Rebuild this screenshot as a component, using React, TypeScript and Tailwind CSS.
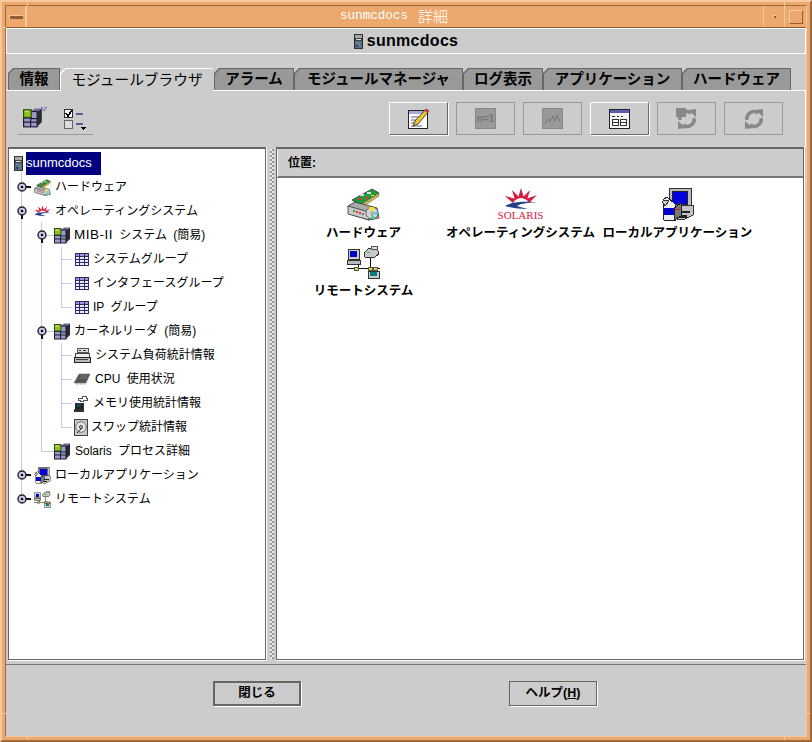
import { ReactNode } from "react";

const font = "[font-family:'Liberation_Sans','Noto_Sans_CJK_JP',sans-serif]";

function ServerIcon({ className }: { className: string }) {
  return (
    <svg viewBox="0 0 10 16" className={className} shapeRendering="crispEdges">
      <rect x="0.5" y="0.5" width="9" height="15" fill="#444" stroke="#222" />
      <rect x="1" y="1" width="8" height="3" fill="#aaa" />
      <rect x="2" y="5" width="6" height="1" fill="#ddd" />
      <rect x="1" y="7" width="8" height="8" fill="#5a6f88" />
      <rect x="2" y="8" width="2" height="2" fill="#7f9ab8" />
      <rect x="5" y="10" width="2" height="2" fill="#7f9ab8" />
      <rect x="2" y="12" width="2" height="2" fill="#30405a" />
    </svg>
  );
}

function CubeIcon({ className }: { className: string }) {
  return (
    <svg viewBox="0 0 17 17" className={className}>
      <polygon points="12,3 16,0.5 16,12 12,16" fill="#2a2a33" />
      <polygon points="7,3 10,0.5 16,0.5 12,3" fill="#6e6e9e" />
      <rect x="0.5" y="8.5" width="11.5" height="7.5" fill="#9a9ad0" stroke="#1c1c2a" />
      <rect x="6.5" y="3" width="5.5" height="6" fill="#9a9ad0" stroke="#1c1c2a" />
      <line x1="6.5" y1="8.5" x2="6.5" y2="16" stroke="#1c1c2a" />
      <line x1="0.5" y1="12" x2="12" y2="12" stroke="#1c1c2a" />
      <rect x="0.5" y="1.5" width="6.5" height="6.5" fill="#8fc31f" stroke="#2d4a10" />
      <rect x="1.5" y="2.5" width="3" height="1" fill="#c9ea70" />
    </svg>
  );
}

function HardwareIcon({ className }: { className: string }) {
  return (
    <svg viewBox="0 0 33 33" className={className}>
      <polygon points="5,12 25,1 32,5 13,17" fill="#1f9a3c" stroke="#333" strokeWidth="0.8" />
      <polygon points="13,17 32,5 32,8 14,20" fill="#c9b54a" stroke="#555" strokeWidth="0.5" />
      <rect x="13" y="6" width="4" height="2" fill="#d8d8d8" />
      <rect x="20" y="4" width="4" height="2" fill="#e0e0e0" />
      <rect x="11" y="10" width="3" height="2" fill="#e33" />
      <rect x="18" y="9" width="3" height="2" fill="#e33" />
      <rect x="24" y="7" width="3" height="1" fill="#ffe14a" />
      <polygon points="1,18 8,14 30,20 32,30 22,32 3,26" fill="#aaa" stroke="#333" strokeWidth="0.8" />
      <polygon points="1,18 22,24 22,32 1,26" fill="#c9c9c9" stroke="#333" strokeWidth="0.8" />
      <rect x="6" y="22" width="2" height="2" fill="#3a3" />
      <rect x="9" y="23" width="2" height="2" fill="#e33" />
      <rect x="12" y="24" width="2" height="2" fill="#e33" />
      <rect x="15" y="25" width="2" height="2" fill="#777" />
      <circle cx="25" cy="25" r="6" fill="#d5d5d5" stroke="#444" strokeWidth="0.7" />
      <polygon points="25,25 22,19 27,19" fill="#ffe400" />
      <polygon points="25,25 28,31 24,31" fill="#35d07a" />
      <polygon points="25,25 31,24 31,27" fill="#39c6e8" />
      <circle cx="25" cy="25" r="1.3" fill="#fff" stroke="#444" strokeWidth="0.5" />
    </svg>
  );
}

function SolarisMark({ className }: { className: string }) {
  return (
    <svg viewBox="0 0 34 22" className={className}>
      <g fill="#d21c3f">
        <polygon points="17,0 20,10 14,10" />
        <polygon points="8,2 16,10 11,12" />
        <polygon points="26,2 23,12 18,10" />
        <polygon points="1,8 12,11 9,15" />
        <polygon points="33,7 25,15 22,11" />
      </g>
      <path d="M1 18 C8 14 14 13 33 14 C20 15 16 16 13 18 C16 19 20 20 24 21 C16 21 8 20 1 18Z" fill="#27408b" />
    </svg>
  );
}

function LocalAppIcon({ className }: { className: string }) {
  return (
    <svg viewBox="0 0 33 33" className={className} shapeRendering="crispEdges">
      <rect x="8" y="0" width="22" height="20" fill="#bbb" stroke="#333" />
      <rect x="11" y="3" width="15" height="13" fill="#0000e0" stroke="#222" />
      <rect x="23" y="17" width="4" height="1" fill="#2c2" />
      <polygon points="11,21 22,17 32,17 32,27 22,32 11,30" fill="#c4c4c4" stroke="#333" />
      <rect x="18" y="23" width="11" height="2" fill="#222" />
      <rect x="18" y="27" width="8" height="3" fill="#222" />
      <polygon points="2,12 6,9 14,16 14,32 3,32" fill="#eee" stroke="#222" />
      <rect x="3" y="20" width="10" height="7" fill="#0000d0" />
      <polygon points="3,12 1,14 4,18 8,13" fill="#ccc" stroke="#333" />
      <polygon points="13,20 20,15 20,28 13,32" fill="#777" stroke="#222" />
      <rect x="14" y="21" width="5" height="1" fill="#c22" />
    </svg>
  );
}

function RemoteIcon({ className }: { className: string }) {
  return (
    <svg viewBox="0 0 33 33" className={className} shapeRendering="crispEdges">
      <path d="M0 22H33M11 14V22M23 11V22M24 22V26" stroke="#111" strokeWidth="1" fill="none" />
      <rect x="1" y="3" width="11" height="10" fill="#ccc" stroke="#333" />
      <rect x="3" y="5" width="7" height="6" fill="#0000c8" />
      <rect x="0" y="14" width="13" height="4" fill="#bbb" stroke="#333" />
      <polygon points="17,7 22,2 30,2 32,8 28,11 18,11" fill="#c8c8c8" stroke="#333" />
      <rect x="20" y="6" width="3" height="1" fill="#2c2" />
      <rect x="24" y="0" width="6" height="3" fill="#e0e0e0" stroke="#555" />
      <rect x="21" y="21" width="4" height="3" fill="#e8d33a" stroke="#555" />
      <rect x="7" y="21" width="4" height="3" fill="#e8d33a" stroke="#555" />
      <rect x="26" y="21" width="4" height="3" fill="#e8d33a" stroke="#555" />
      <rect x="21" y="25" width="11" height="7" fill="#ccc" stroke="#333" />
      <rect x="23" y="26" width="7" height="4" fill="#0a7a80" />
    </svg>
  );
}

function TableIcon() {
  return (
    <svg viewBox="0 0 14 13" className="w-[14px] h-[13px]" shapeRendering="crispEdges">
      <rect x="0.5" y="0.5" width="13" height="12" fill="#e8e8f8" stroke="#2b2b6a" />
      <rect x="1" y="1" width="12" height="2" fill="#9a9ad0" />
      <path d="M0 3.5H14M0 6.5H14M0 9.5H14M4.5 1V13M9.5 1V13" stroke="#2b2b6a" fill="none" />
    </svg>
  );
}

function LoadIcon() {
  return (
    <svg viewBox="0 0 17 15" className="w-[17px] h-[15px]" shapeRendering="crispEdges">
      <rect x="3" y="0" width="11" height="4" fill="#ddd" stroke="#555" />
      <path d="M5 2H7M9 2H12" stroke="#333" />
      <polygon points="2,5 15,5 16,9 1,9" fill="#eee" stroke="#444" />
      <rect x="0.5" y="9.5" width="16" height="5" fill="#bbb" stroke="#222" />
      <rect x="2" y="11" width="12" height="1" fill="#444" />
    </svg>
  );
}

function CpuIcon() {
  return (
    <svg viewBox="0 0 17 12" className="w-[17px] h-[12px]">
      <polygon points="5,1 16,1 12,10 0,10" fill="#555" stroke="#777" strokeWidth="0.6" />
      <path d="M2 11H12" stroke="#888" strokeDasharray="1 1" />
      <polygon points="7,2 14,2 12,6 6,6" fill="#666" />
    </svg>
  );
}

function MemoryIcon() {
  return (
    <svg viewBox="0 0 14 17" className="w-[14px] h-[17px]" shapeRendering="crispEdges">
      <path d="M4 3H8V1H12V3H13V5H9V6H6V5H4Z" fill="#fff" stroke="#555" />
      <rect x="1" y="8" width="8" height="6" fill="#222" stroke="#333" />
      <rect x="3" y="9" width="4" height="3" fill="#0a5060" />
      <rect x="0" y="14" width="10" height="3" fill="#333" />
    </svg>
  );
}

function SwapIcon() {
  return (
    <svg viewBox="0 0 14 17" className="w-[14px] h-[17px]">
      <rect x="0.5" y="0.5" width="13" height="16" fill="#c8c8c8" stroke="#444" />
      <circle cx="7" cy="8" r="5.3" fill="#e2e2e2" stroke="#777" />
      <circle cx="7" cy="8" r="1.6" fill="#aaa" stroke="#555" />
      <path d="M3 14L8 9" stroke="#222" />
    </svg>
  );
}

function EditIcon() {
  return (
    <svg viewBox="0 0 22 21" className="w-[22px] h-[21px]">
      <rect x="0.5" y="2.5" width="19" height="18" fill="#fff" stroke="#222" />
      <rect x="1" y="3" width="18" height="3" fill="#a8a8dc" />
      <path d="M3 9H11M3 12H9M3 15H7M3 18H14" stroke="#5a5a9a" />
      <polygon points="5,18 7,13 18,1 21,3 10,16" fill="#f1c62d" stroke="#222" strokeWidth="0.8" />
      <polygon points="18,1 21,3 19.5,5 16.5,3" fill="#d4423a" />
    </svg>
  );
}

function DisabledBlock({ children }: { children: ReactNode }) {
  return <div className="w-[21px] h-[21px] bg-[#999] border border-[#888] flex items-center justify-center">{children}</div>;
}

function DialogIcon() {
  return (
    <svg viewBox="0 0 21 20" className="w-[21px] h-[20px]" shapeRendering="crispEdges">
      <rect x="0.5" y="0.5" width="20" height="19" fill="#f4f4f4" stroke="#222" />
      <rect x="1" y="1" width="19" height="3" fill="#5c5caa" />
      <path d="M3 7H6M8 7H10M12 7H14" stroke="#333" />
      <rect x="3.5" y="10.5" width="6" height="6" fill="#fff" stroke="#333" />
      <rect x="11.5" y="10.5" width="6" height="6" fill="#fff" stroke="#333" />
      <path d="M3 13.5H10M11 13.5H18" stroke="#333" />
    </svg>
  );
}

function RefreshIcon({ extra }: { extra?: boolean }) {
  return (
    <svg viewBox="0 0 22 22" className="w-[22px] h-[22px]">
      {extra && <rect x="0" y="0" width="10" height="9" fill="#888" />}
      <path d="M4 12A7 7 0 0 1 15 5" stroke="#888" strokeWidth="3.5" fill="none" />
      <polygon points="12,2 20,1 20,9" fill="#888" />
      <path d="M18 10A7 7 0 0 1 7 17" stroke="#888" strokeWidth="3.5" fill="none" />
      <polygon points="10,20 2,21 2,13" fill="#888" />
    </svg>
  );
}

function ToolButton({ enabled, children }: { enabled?: boolean; children: ReactNode }) {
  return (
    <button
      className={
        enabled
          ? "w-[59px] h-[33px] border border-t-white border-l-white border-r-[#666] border-b-[#666] shadow-[1px_1px_0_#fff] flex items-center justify-center"
          : "w-[59px] h-[33px] border border-[#999] flex items-center justify-center"
      }
    >
      {children}
    </button>
  );
}

function Tab({ label, width, active }: { label: string; width: string; active?: boolean }) {
  const clip = "[clip-path:polygon(5px_0,100%_0,100%_100%,0_100%,0_5px)]";
  if (active) {
    return (
      <div className={`${width} h-[23px] -mb-px mr-px relative bg-white pl-px pt-px pr-0 shadow-[1px_0_0_#666] ${clip}`}>
        <div className={`h-full bg-[#cccccc] flex items-center justify-center text-[14.7px] font-normal text-black ${clip}`}>{label}</div>
      </div>
    );
  }
  return (
    <div className={`${width} h-[22px] bg-[#666] px-px pt-px ${clip}`}>
      <div className={`h-full bg-[#999999] flex items-center justify-center text-[14.5px] font-bold text-black ${clip}`}>{label}</div>
    </div>
  );
}

function Handle({ open }: { open?: boolean }) {
  return (
    <svg viewBox="0 0 17 24" className="w-[17px] h-[24px] shrink-0">
      {open ? <rect x="4" y="14" width="2" height="6" fill="#111" /> : <rect x="9" y="11" width="5" height="2" fill="#111" />}
      <circle cx="5" cy="12" r="4" fill="#c8c8ee" stroke="#222" strokeWidth="1.4" />
      <circle cx="5" cy="12" r="1.3" fill="#111" />
    </svg>
  );
}

function TreeRow({ pad, handle, icon, label, gap }: { pad: string; handle?: "open" | "closed"; icon: ReactNode; label: ReactNode; gap: string }) {
  return (
    <div className={`flex items-center h-[24px] ${pad}`}>
      {handle && <Handle open={handle === "open"} />}
      {icon}
      <span className={`${gap} text-[12px] text-black whitespace-nowrap [word-spacing:3px]`}>{label}</span>
    </div>
  );
}

function Notch({ className }: { className: string }) {
  return <div className={`absolute bg-[#f8c9a1] ${className}`} />;
}

function DesktopItem({ icon, label }: { icon: ReactNode; label: string }) {
  return (
    <div className="h-[58px] flex flex-col items-center">
      <div className="h-[34px] flex items-center justify-center">{icon}</div>
      <div className="text-[12.5px] font-bold text-black whitespace-nowrap leading-[24px]">{label}</div>
    </div>
  );
}

export default function App() {
  return (
    <div className={`${font} relative w-[812px] h-[742px] bg-[#eda86e] border-2 border-t-[#f8c9a1] border-l-[#f8c9a1] border-b-[#9c6a3c] border-r-[#9c6a3c] p-[3px] flex flex-col overflow-hidden`}>
      <Notch className="left-[25px] -top-[2px] w-px h-[6px]" />
      <Notch className="-left-[2px] top-[25px] w-[6px] h-px" />
      <Notch className="left-[782px] -top-[2px] w-px h-[6px]" />
      <Notch className="left-[25px] bottom-[-2px] w-px h-[6px]" />
      <Notch className="left-[782px] bottom-[-2px] w-px h-[6px]" />
      <Notch className="-left-[2px] top-[711px] w-[6px] h-px" />
      <Notch className="right-[-2px] top-[711px] w-[6px] h-px" />

      <div className="flex-1 flex flex-col border border-t-[#9c6a3c] border-l-[#9c6a3c] border-b-[#f8c9a1] border-r-[#f8c9a1] min-h-0">
        {/* title bar */}
        <div className="h-[22px] flex shrink-0 border-b border-[#8f5f33]">
          <div className="w-[21px] border-r-2 border-r-[#f8c9a1] flex items-center justify-center">
            <div className="w-[14px] h-[4px] bg-[#8f5f33] border-t border-l border-[#f8c9a1]" />
          </div>
          <div className="flex-1 flex items-center justify-center gap-[10px] text-white pr-[2px]">
            <span className="[font-family:'Liberation_Mono',monospace] text-[12.6px]">sunmcdocs</span>
            <span className="[font-family:'Noto_Sans_CJK_JP',sans-serif] text-[15px] font-light">詳細</span>
          </div>
          <div className="w-[22px] border-l border-r border-l-[#f8c9a1] border-r-[#f8c9a1] flex items-center justify-center">
            <div className="w-[3px] h-[3px] bg-[#8f5f33] border-t border-l border-[#f8c9a1]" />
          </div>
          <div className="w-[21px] flex items-center justify-center">
            <div className="w-[14px] h-[14px] border border-t-[#f8c9a1] border-l-[#f8c9a1] border-b-[#8f5f33] border-r-[#8f5f33]" />
          </div>
        </div>

        {/* window body */}
        <div className="flex-1 bg-[#cccccc] flex flex-col min-h-0">
          <div className="h-[26px] shrink-0 border border-white flex items-center justify-center gap-[4px]">
            <ServerIcon className="w-[9px] h-[15px]" />
            <span className="text-[16px] font-bold text-black tracking-[0.3px]">sunmcdocs</span>
          </div>

          <div className="flex pl-[2px] mt-[14px] shrink-0 relative z-10">
            <Tab label="情報" width="w-[52px]" />
            <Tab label="モジュールブラウザ" width="w-[153px]" active />
            <Tab label="アラーム" width="w-[80px]" />
            <Tab label="モジュールマネージャ" width="w-[169px]" />
            <Tab label="ログ表示" width="w-[80px]" />
            <Tab label="アプリケーション" width="w-[139px]" />
            <Tab label="ハードウェア" width="w-[109px]" />
          </div>

          {/* toolbar */}
          <div className="h-[57px] shrink-0 border-t border-t-white border-r border-r-white pt-[11px] pl-[12px] pr-[22px] flex justify-between items-start">
            <div className="w-[75px] h-[33px] border-b border-[#999] flex items-start pl-[5px] gap-[21px]">
              <div className="relative">
                <CubeIcon className="w-[20px] h-[22px] mt-[5px]" />
                <svg viewBox="0 0 6 4" className="absolute -right-[4px] top-[5px] w-[6px] h-[4px]">
                  <polygon points="0,0 6,0 3,4" fill="#c8c8ee" stroke="#55558a" strokeWidth="0.8" />
                </svg>
              </div>
              <svg viewBox="0 0 22 22" className="w-[22px] h-[22px] mt-[7px]" shapeRendering="crispEdges">
                <rect x="0.5" y="0.5" width="8" height="8" fill="#fff" stroke="#333" />
                <path d="M2 4L4 7L8 1" stroke="#000" strokeWidth="1.6" fill="none" />
                <rect x="0.5" y="11.5" width="8" height="8" fill="#ddd" stroke="#666" />
                <rect x="12" y="4" width="7" height="2" fill="#5c5c9a" />
                <rect x="12" y="14" width="7" height="2" fill="#5c5c9a" />
                <polygon points="16,18 22,18 19,21" fill="#000" />
              </svg>
            </div>
            <div className="flex gap-[8px]">
              <ToolButton enabled>
                <EditIcon />
              </ToolButton>
              <ToolButton>
                <DisabledBlock>
                  <span className="text-[10px] font-bold text-[#777]">n=1</span>
                </DisabledBlock>
              </ToolButton>
              <ToolButton>
                <DisabledBlock>
                  <svg viewBox="0 0 19 19" className="w-[19px] h-[19px]">
                    <path d="M2 15L5 10L7 13L10 7L12 12L14 6L17 13" stroke="#777" fill="none" />
                  </svg>
                </DisabledBlock>
              </ToolButton>
              <ToolButton enabled>
                <DialogIcon />
              </ToolButton>
              <ToolButton>
                <RefreshIcon extra />
              </ToolButton>
              <ToolButton>
                <RefreshIcon />
              </ToolButton>
            </div>
          </div>

          {/* split panes */}
          <div className="h-[514px] shrink-0 ml-[2px] mr-px flex">
            <div className="w-[259px] bg-white pr-px pb-px pt-0">
              <div className="relative h-full bg-white border border-[#666] border-t-2 pt-[2px]">
                <svg viewBox="9 149 256 509" className="absolute left-0 top-0 w-[256px] h-[509px]" fill="none" stroke="#c8c8ee">
                  <path d="M21.5 170V499.5M21.5 187.5H32M21.5 475.5H32M21.5 499.5H32" />
                  <path d="M41.5 222V451.5H54M41.5 235.5H54M41.5 331.5H54" />
                  <path d="M61.5 247V307.5H72M61.5 259.5H72M61.5 283.5H72" />
                  <path d="M61.5 343V427.5H72M61.5 355.5H72M61.5 379.5H72M61.5 403.5H72" />
                </svg>
                <div className="relative">
                  <div className="flex items-center h-[24px] pl-[5px]">
                    <ServerIcon className="w-[9px] h-[15px]" />
                    <span className="ml-[3px] w-[75px] h-[23px] bg-[#000080] text-white text-[13px] flex items-center">sunmcdocs</span>
                  </div>
                  <TreeRow pad="pl-[8px]" handle="closed" gap="ml-[4px]" label="ハードウェア" icon={<HardwareIcon className="w-[17px] h-[17px]" />} />
                  <TreeRow pad="pl-[8px]" handle="open" gap="ml-[4px]" label="オペレーティングシステム" icon={<SolarisMark className="w-[17px] h-[12px]" />} />
                  <TreeRow
                    pad="pl-[28px]"
                    handle="open"
                    gap="ml-[3px]"
                    label={
                      <>
                        <span className="text-[13.5px] tracking-[0.5px]">MIB-II</span> システム (簡易)
                      </>
                    }
                    icon={<CubeIcon className="w-[17px] h-[17px]" />}
                  />
                  <TreeRow pad="pl-[66px]" gap="ml-[4px]" label="システムグループ" icon={<TableIcon />} />
                  <TreeRow pad="pl-[66px]" gap="ml-[4px]" label="インタフェースグループ" icon={<TableIcon />} />
                  <TreeRow pad="pl-[66px]" gap="ml-[4px]" label="IP グループ" icon={<TableIcon />} />
                  <TreeRow pad="pl-[28px]" handle="open" gap="ml-[3px]" label="カーネルリーダ (簡易)" icon={<CubeIcon className="w-[17px] h-[17px]" />} />
                  <TreeRow pad="pl-[65px]" gap="ml-[4px]" label="システム負荷統計情報" icon={<LoadIcon />} />
                  <TreeRow pad="pl-[65px]" gap="ml-[4px]" label="CPU 使用状況" icon={<CpuIcon />} />
                  <TreeRow pad="pl-[65px]" gap="ml-[5px]" label="メモリ使用統計情報" icon={<MemoryIcon />} />
                  <TreeRow pad="pl-[65px]" gap="ml-[3px]" label="スワップ統計情報" icon={<SwapIcon />} />
                  <TreeRow pad="pl-[45px]" gap="ml-[4px]" label="Solaris プロセス詳細" icon={<CubeIcon className="w-[17px] h-[17px]" />} />
                  <TreeRow pad="pl-[8px]" handle="closed" gap="ml-[4px]" label="ローカルアプリケーション" icon={<LocalAppIcon className="w-[17px] h-[17px]" />} />
                  <TreeRow pad="pl-[8px]" handle="closed" gap="ml-[4px]" label="リモートシステム" icon={<RemoteIcon className="w-[17px] h-[17px]" />} />
                </div>
              </div>
            </div>

            <div className="w-[9px] flex justify-center pt-[2px] pb-[2px]">
              <div className="w-[4px] h-full bg-[repeating-conic-gradient(#999_0_25%,#e8e8e8_0_50%)] bg-[length:4px_4px]" />
            </div>

            <div className="flex-1 bg-white pr-px pb-px">
              <div className="h-full flex flex-col border border-[#666] border-t-2">
                <div className="h-[29px] shrink-0 bg-[#cccccc] border-l border-l-white border-b-2 border-b-[#777] flex items-center pl-[10px]">
                  <span className="text-[12px] font-bold text-black">位置:</span>
                </div>
                <div className="flex-1 bg-white border-t border-t-white pt-[8px] pl-[8px] grid grid-cols-[157px_157px_157px] content-start">
                  <DesktopItem label="ハードウェア" icon={<HardwareIcon className="w-[33px] h-[33px]" />} />
                  <DesktopItem
                    label="オペレーティングシステム"
                    icon={
                      <div className="flex flex-col items-center">
                        <SolarisMark className="w-[34px] h-[22px]" />
                        <span className="[font-family:'Liberation_Serif',serif] text-[11px] leading-[11px] text-[#d21c3f]">SOLARIS</span>
                      </div>
                    }
                  />
                  <DesktopItem label="ローカルアプリケーション" icon={<LocalAppIcon className="w-[33px] h-[33px]" />} />
                  <DesktopItem label="リモートシステム" icon={<RemoteIcon className="w-[33px] h-[33px]" />} />
                </div>
              </div>
            </div>
          </div>

          {/* footer */}
          <div className="flex-1 border-t border-t-[#777] mt-[3px] flex justify-center items-start gap-[208px] pt-[16px] pr-[2px]">
            <button className="w-[88px] h-[25px] border-2 border-[#666] shadow-[1px_1px_0_#fff] text-[12.5px] font-bold text-black">閉じる</button>
            <button className="w-[88px] h-[25px] border border-[#666] shadow-[1px_1px_0_#fff] text-[12.5px] font-bold text-black">
              ヘルプ(<span className="underline">H</span>)
            </button>
          </div>
        </div>
      </div>
    </div>
  );
}
